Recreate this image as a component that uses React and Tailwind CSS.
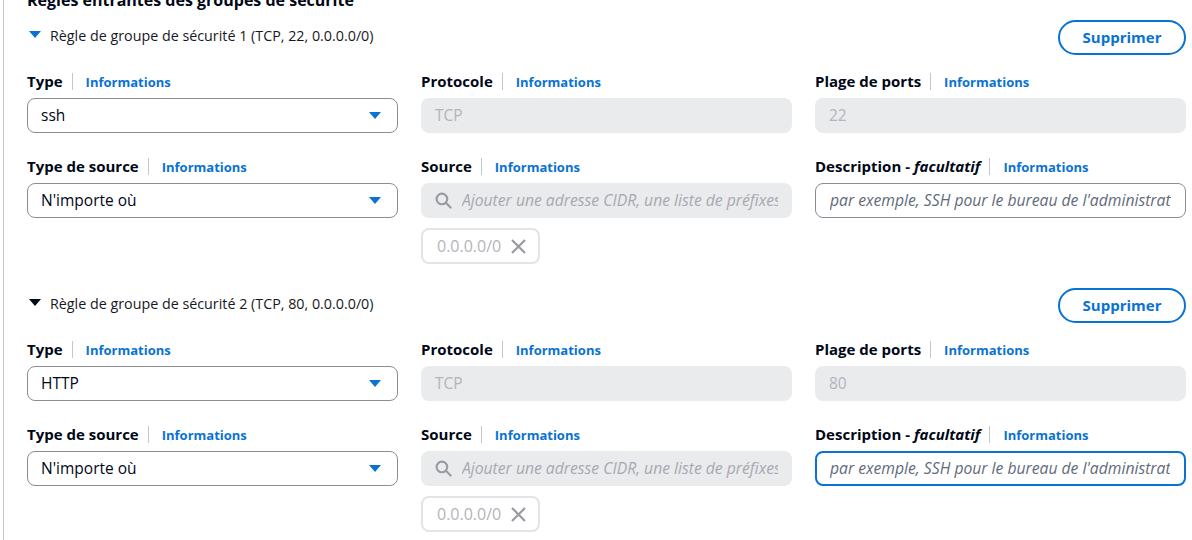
const rules = [
  {
    title: 'Règle de groupe de sécurité 1 (TCP, 22, 0.0.0.0/0)',
    caretBlue: true,
    type: 'ssh',
    port: '22',
    focused: false,
  },
  {
    title: 'Règle de groupe de sécurité 2 (TCP, 80, 0.0.0.0/0)',
    caretBlue: false,
    type: 'HTTP',
    port: '80',
    focused: true,
  },
];

const Caret = ({ className }) => (
  <svg className={className} viewBox="0 0 12 7" fill="currentColor">
    <path d="M0 0h12L6 7z" />
  </svg>
);

const FieldLabel = ({ children }) => (
  <div className="flex items-center h-[22px] -mt-[1px] mb-[6px]">
    <span className="text-[15px] leading-[22px] font-bold text-[#000716] whitespace-nowrap">{children}</span>
    <span className="ml-[9px] mr-[13px] w-px h-[17px] bg-[#c6c6cd]" />
    <a className="text-[13px] leading-[22px] pt-[2px] font-bold text-[#0972d3]">Informations</a>
  </div>
);

const Select = ({ value }) => (
  <div className="flex items-center justify-between h-[35px] rounded-[8px] border border-[#8c8c94] pl-[13px] pr-[16px]">
    <span className="text-[15.5px] text-[#000716]">{value}</span>
    <Caret className="w-[12px] h-[7px] text-[#0972d3]" />
  </div>
);

const Disabled = ({ value }) => (
  <div className="flex items-center h-[35px] rounded-[8px] bg-[#e9ebed] px-[14px]">
    <span className="text-[15.5px] text-[#b4b4bb]">{value}</span>
  </div>
);

const SourceSearch = () => (
  <div>
    <div className="flex items-center h-[35px] rounded-[8px] bg-[#e9ebed] pl-[14px] overflow-hidden">
      <svg className="w-[17px] h-[17px] shrink-0 text-[#9a9aa2]" viewBox="0 0 16 16" fill="none" stroke="currentColor" strokeWidth="2">
        <circle cx="6.5" cy="6.5" r="5" />
        <path d="M10.2 10.2l4.5 4.5" strokeLinecap="round" />
      </svg>
      <span className="ml-[10px] text-[15.7px] italic text-[#a8a8b0] whitespace-nowrap overflow-hidden mr-[14px]">
        Ajouter une adresse CIDR, une liste de préfixes ou un groupe de sécurité
      </span>
    </div>
    <div className="mt-[10px] inline-flex items-center h-[36px] w-[119px] rounded-[8px] border-2 border-[#e3e3e8] pl-[14px]">
      <span className="text-[16px] text-[#b4b4bb]">0.0.0.0/0</span>
      <svg className="ml-[10px] w-[15px] h-[15px] text-[#9a9aa2]" viewBox="0 0 15 15" fill="none" stroke="currentColor" strokeWidth="2.2">
        <path d="M1 1l13 13M14 1L1 14" />
      </svg>
    </div>
  </div>
);

const Description = ({ focused }) => (
  <div
    className={`flex items-center h-[35px] rounded-[8px] overflow-hidden ${
      focused ? 'border-2 border-[#0972d3] pl-[13px]' : 'border border-[#8c8c94] pl-[14px]'
    }`}
  >
    <span className="text-[15.7px] italic text-[#5f6b7a] whitespace-nowrap overflow-hidden mr-[14px]">
      par exemple, SSH pour le bureau de l'administrateur
    </span>
  </div>
);

const Rule = ({ rule, first }) => (
  <div className={first ? 'pt-[9px]' : 'pt-[24px]'}>
    <div className="flex items-center justify-between h-[35px]">
      <div className="flex items-center -mt-[3px]">
        <Caret className={`ml-[2px] mr-[9px] -mt-[4px] w-[12px] h-[7px] ${rule.caretBlue ? 'text-[#0972d3]' : 'text-[#000716]'}`} />
        <span className="text-[14.3px] text-[#16191f]">{rule.title}</span>
      </div>
      <button className="h-[35px] w-[128px] rounded-full border-2 border-[#0972d3] text-[15px] font-bold text-[#0972d3]">
        Supprimer
      </button>
    </div>
    <div className="mt-[16px] grid grid-cols-3 gap-x-[23px] gap-y-[23px] items-start">
      <div>
        <FieldLabel>Type</FieldLabel>
        <Select value={rule.type} />
      </div>
      <div>
        <FieldLabel>Protocole</FieldLabel>
        <Disabled value="TCP" />
      </div>
      <div>
        <FieldLabel>Plage de ports</FieldLabel>
        <Disabled value={rule.port} />
      </div>
      <div>
        <FieldLabel>Type de source</FieldLabel>
        <Select value="N'importe où" />
      </div>
      <div>
        <FieldLabel>Source</FieldLabel>
        <SourceSearch />
      </div>
      <div>
        <FieldLabel>
          Description - <i>facultatif</i>
        </FieldLabel>
        <Description focused={rule.focused} />
      </div>
    </div>
  </div>
);

export default function App() {
  return (
    <div className="h-[540px] w-[1192px] overflow-hidden bg-white font-['Open_Sans',sans-serif]">
      <div className="ml-[3px] h-full flex flex-col border-l border-[#c6c6cd] pl-[23px] pr-[6px]">
        <h2 className="-mt-[11px] h-[22px] leading-[22px] text-[16px] font-bold text-[#000716]">
          Règles entrantes des groupes de sécurité
        </h2>
        {rules.map((rule, i) => (
          <Rule key={i} rule={rule} first={i === 0} />
        ))}
      </div>
    </div>
  );
}
